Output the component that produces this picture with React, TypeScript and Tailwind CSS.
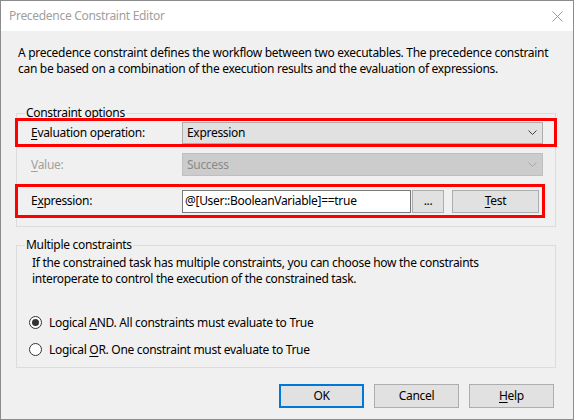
import React from "react";

const font = { fontFamily: '"Noto Sans", "Open Sans", sans-serif' };

function Chevron({ disabled }: { disabled?: boolean }) {
  return (
    <svg width="9" height="6" viewBox="0 0 9 6" className="shrink-0">
      <path d="M0.5 0.5 L4.5 4.5 L8.5 0.5" fill="none" stroke={disabled ? "#a8a8a8" : "#404040"} strokeWidth="1" />
    </svg>
  );
}

function Radio({ checked }: { checked?: boolean }) {
  return (
    <div className="w-[13px] h-[13px] rounded-full border border-[#333] bg-white flex items-center justify-center shrink-0">
      {checked && <div className="w-[7px] h-[7px] rounded-full bg-[#333]" />}
    </div>
  );
}

export default function App() {
  return (
    <div
      className="w-[574px] h-[420px] border border-[#8c8c8c] bg-[#f0f0f0] flex flex-col text-[12px] tracking-[-0.3px] text-black leading-[16px] overflow-hidden"
      style={font}
    >
      {/* Title bar */}
      <div className="h-[30px] bg-white flex items-center justify-between pl-[8px] pr-[10px] shrink-0">
        <span className="text-[#a0a0a0] text-[12px]">Precedence Constraint Editor</span>
        <svg width="11" height="11" viewBox="0 0 11 11">
          <path d="M0.5 0.5 L10.5 10.5 M10.5 0.5 L0.5 10.5" stroke="#9a9a9a" strokeWidth="1" />
        </svg>
      </div>

      {/* Description */}
      <div className="pl-[17px] pt-[14px] whitespace-nowrap leading-[16px]">
        A precedence constraint defines the workflow between two executables. The precedence constraint
        <br />
        can be based on a combination of the execution results and the evaluation of expressions.
      </div>

      {/* Constraint options group */}
      <div className="relative ml-[15px] mt-[36px] w-[540px] h-[114px] border border-[#dcdcdc] pt-[4px]">
        <span className="absolute left-[8px] top-[-9px] bg-[#f0f0f0] px-[1px] leading-[16px]">Constraint options</span>

        {/* Red row 1 */}
        <div className="relative ml-[-2px] w-[542px] h-[29px] border-[3px] border-[#ff0000] flex items-center pl-[13px] pr-[11px]">
          <span className="w-[151px] shrink-0">
            <u className="underline-offset-2">E</u>valuation operation:
          </span>
          <div className="flex-1 h-[22px] bg-[#e1e1e1] border border-[#adadad] flex items-center justify-between pl-[4px] pr-[5px]">
            <span>Expression</span>
            <Chevron />
          </div>
        </div>

        {/* Value row */}
        <div className="mt-[6px] h-[23px] flex items-center pl-[14px] pr-[12px]">
          <span className="w-[151px] shrink-0 text-[#a0a0a0]">
            <u className="underline-offset-2">V</u>alue:
          </span>
          <div className="flex-1 h-[23px] bg-[#cccccc] border border-[#bfbfbf] flex items-center justify-between pl-[4px] pr-[5px]">
            <span className="text-[#8a8a8a]">Success</span>
            <Chevron disabled />
          </div>
        </div>

        {/* Red row 2 */}
        <div className="mt-[8px] ml-[-2px] w-[530px] h-[34px] border-[3px] border-[#ff0000] flex items-center pl-[13px]">
          <span className="w-[151px] shrink-0">
            E<u className="underline-offset-2">x</u>pression:
          </span>
          <div className="w-[229px] h-[23px] bg-white border border-[#7a7a7a] flex items-center pl-[2px] whitespace-nowrap">
            @[User::BooleanVariable]==true
          </div>
          <div className="ml-[1px] w-[32px] h-[23px] bg-[#e1e1e1] border border-[#adadad] flex items-center justify-center">
            ...
          </div>
          <div className="ml-[8px] w-[87px] h-[23px] bg-[#e1e1e1] border border-[#adadad] flex items-center justify-center">
            <span>
              <u className="underline-offset-2">T</u>est
            </span>
          </div>
        </div>
      </div>

      {/* Multiple constraints group */}
      <div className="relative ml-[15px] mt-[18px] w-[540px] h-[123px] border border-[#dcdcdc]">
        <span className="absolute left-[8px] top-[-9px] bg-[#f0f0f0] px-[1px] leading-[16px]">Multiple constraints</span>
        <div className="pl-[15px] pt-[9px] leading-[16px] whitespace-nowrap">
          If the constrained task has multiple constraints, you can choose how the constraints
          <br />
          interoperate to control the execution of the constrained task.
        </div>
        <div className="mt-[28px] pl-[12px] flex items-center gap-[7px] h-[15px]">
          <Radio checked />
          <span>
            Logical <u className="underline-offset-2">A</u>ND. All constraints must evaluate to True
          </span>
        </div>
        <div className="mt-[12px] pl-[12px] flex items-center gap-[7px] h-[15px]">
          <Radio />
          <span>
            Logical <u className="underline-offset-2">O</u>R. One constraint must evaluate to True
          </span>
        </div>
      </div>

      {/* Buttons */}
      <div className="mt-[16px] flex justify-end gap-[10px] pr-[19px]">
        <div className="w-[85px] h-[24px] bg-[#e1e1e1] border-2 border-[#0078d7] flex items-center justify-center">OK</div>
        <div className="w-[85px] h-[24px] bg-[#e1e1e1] border border-[#adadad] flex items-center justify-center">Cancel</div>
        <div className="w-[85px] h-[24px] bg-[#e1e1e1] border border-[#adadad] flex items-center justify-center">
          <span>
            <u className="underline-offset-2">H</u>elp
          </span>
        </div>
      </div>
    </div>
  );
}
